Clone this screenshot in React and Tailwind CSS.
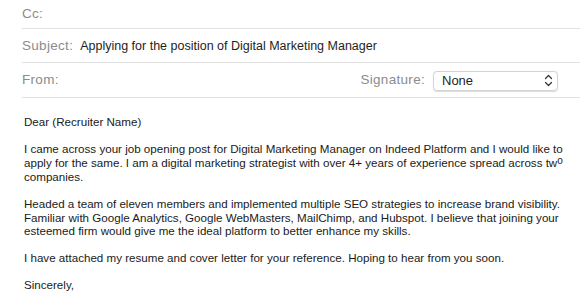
export default function App() {
  return (
    <div className="w-[580px] h-[300px] overflow-hidden bg-white relative" style={{ fontFamily: '"Liberation Sans", Arial, sans-serif' }}>
      <div className="pl-[22px]">
        <div className="h-[29px] border-b border-[#e3e3e3] flex items-center text-[13.5px] tracking-[0.2px] text-[#8c8c8c]">Cc:</div>
        <div className="h-[34px] border-b border-[#e3e3e3] flex items-center pt-[1px]">
          <span className="text-[13.5px] tracking-[0.3px] text-[#8c8c8c]">Subject:</span>
          <span className="ml-[7px] text-[12.5px] text-[#1e1e1e]">Applying for the position of Digital Marketing Manager</span>
        </div>
        <div className="h-[35px] border-b border-[#e3e3e3] flex items-center pt-[1px]">
          <span className="text-[13.5px] tracking-[0.3px] text-[#8c8c8c]">From:</span>
          <span className="ml-auto text-[13.5px] tracking-[0.3px] text-[#8c8c8c]">Signature:</span>
          <div className="ml-[8px] mr-[22px] w-[125px] h-[20px] rounded-[4px] border border-[#d4d4d4] shadow-[0_0.5px_1px_rgba(0,0,0,0.15)] flex items-center pl-[8px] pr-[4px] text-[13px] text-[#1e1e1e]">
            <span>None</span>
            <svg className="ml-auto" width="9" height="13" viewBox="0 0 9 13" fill="none" stroke="#333" strokeWidth="1.2" strokeLinecap="round" strokeLinejoin="round">
              <path d="M1.5 4.5 L4.5 1.5 L7.5 4.5" />
              <path d="M1.5 8.5 L4.5 11.5 L7.5 8.5" />
            </svg>
          </div>
        </div>
      </div>
      <div className="pl-[24px] pt-[17px] text-[11.6px] leading-[13.5px] text-[#1a1a1a] whitespace-nowrap">
        <p>Dear (Recruiter Name)</p>
        <p className="mt-[13.5px]">I came across your job opening post for Digital Marketing Manager on Indeed Platform and I would like to</p>
        <p>apply for the same. I am a digital marketing strategist with over 4+ years of experience spread across tw<span className="relative -top-[3px] text-[10px]">o</span></p>
        <p>companies.</p>
        <p className="mt-[13.5px]">Headed a team of eleven members and implemented multiple SEO strategies to increase brand visibility.</p>
        <p>Familiar with Google Analytics, Google WebMasters, MailChimp, and Hubspot. I believe that joining your</p>
        <p>esteemed firm would give me the ideal platform to better enhance my skills.</p>
        <p className="mt-[13.5px]">I have attached my resume and cover letter for your reference. Hoping to hear from you soon.</p>
        <p className="mt-[13.5px]">Sincerely,</p>
      </div>
    </div>
  );
}
